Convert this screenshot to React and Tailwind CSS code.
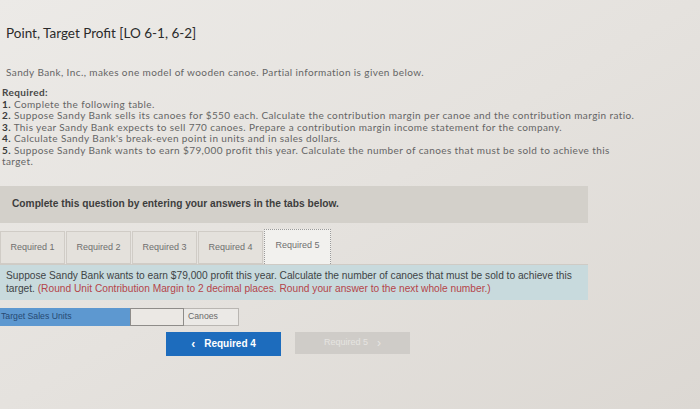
import React from "react";

const tabs = ["Required 1", "Required 2", "Required 3", "Required 4", "Required 5"];

export default function App() {
  const body = { fontFamily: "Lato, 'Open Sans', sans-serif" };
  const tahoma = { fontFamily: "'Liberation Sans', Arial, sans-serif" };

  return (
    <div className="w-[700px] h-[409px] overflow-hidden bg-linear-to-br from-[#eceae7] via-[#e5e2de] to-[#dcd8d3] text-[#656565]" style={body}>
      <div className="pt-[24px] pl-[6px]">
        <h1 className="text-[13.5px] leading-[18px] text-[#2b2b2b]">Point, Target Profit [LO 6-1, 6-2]</h1>
      </div>

      <p className="mt-[24px] pl-[6px] text-[10px] tracking-[0.4px] leading-[12px]">
        Sandy Bank, Inc., makes one model of wooden canoe. Partial information is given below.
      </p>

      <div className="mt-[9px] w-[642px] text-[10px] tracking-[0.4px] leading-[11.5px]">
        <p className="pl-[2px] font-bold text-[#474747]">Required:</p>
        <p className="pl-[2px]"><b className="text-[#3a3a3a]">1.</b> Complete the following table.</p>
        <p className="pl-[2px]"><b className="text-[#3a3a3a]">2.</b> Suppose Sandy Bank sells its canoes for $550 each. Calculate the contribution margin per canoe and the contribution margin ratio.</p>
        <p className="pl-[2px]"><b className="text-[#3a3a3a]">3.</b> This year Sandy Bank expects to sell 770 canoes. Prepare a contribution margin income statement for the company.</p>
        <p className="pl-[2px]"><b className="text-[#3a3a3a]">4.</b> Calculate Sandy Bank's break-even point in units and in sales dollars.</p>
        <p className="pl-[2px] pr-[20px]"><b className="text-[#3a3a3a]">5.</b> Suppose Sandy Bank wants to earn $79,000 profit this year. Calculate the number of canoes that must be sold to achieve this target.</p>
      </div>

      <div className="w-[588px]">
        <div className="mt-[18px] h-[37px] bg-[#d3d0ca] flex items-center pl-[12px]">
          <p className="text-[10.2px] font-bold text-[#3d3d3d]" style={tahoma}>
            Complete this question by entering your answers in the tabs below.
          </p>
        </div>

        <div className="mt-[7px] h-[35px] flex items-end border-b border-[#cfcbc5]" style={tahoma}>
          {tabs.map((t, i) =>
            i === 4 ? (
              <div key={t} className="w-[67px] h-[35px] bg-[#f2f1ee] border border-dotted border-[#9a9a9a] border-b-0 flex items-center justify-center pb-[1px] text-[9px] text-[#6f6f6f]">
                {t}
              </div>
            ) : (
              <div key={t} className="w-[65px] h-[33px] mr-[1px] bg-[#e4e1dc] border border-[#d0ccc6] flex items-center justify-center pt-[2px] text-[9px] text-[#6f6f6f]">
                {t}
              </div>
            )
          )}
        </div>

        <div className="h-[35px] bg-[#c8dadd] px-[6px] pt-[4px] text-[10.2px] leading-[13px] text-[#3e4446]" style={tahoma}>
          Suppose Sandy Bank wants to earn $79,000 profit this year. Calculate the number of canoes that must be sold to achieve this target. <span className="text-[#b5454a]">(Round Unit Contribution Margin to 2 decimal places. Round your answer to the next whole number.)</span>
        </div>
      </div>

      <div className="mt-[8px] flex h-[18px] text-[8.7px]" style={tahoma}>
        <div className="w-[130px] bg-[#5d98d0] text-[#274a73] flex items-center pl-[1px]">Target Sales Units</div>
        <div className="w-[54px] bg-[#ebe8e4] border border-[#8e8c89]"></div>
        <div className="w-[55px] bg-[#ebe9e6] border border-[#b9b6b2] border-l-0 flex items-center pl-[4px] text-[#6a6a6a]">Canoes</div>
      </div>

      <div className="mt-[6px] flex pl-[166px] gap-[14px]" style={tahoma}>
        <button className="w-[115px] h-[24px] bg-[#1d6cbd] text-white text-[10px] font-bold flex items-center justify-center gap-[9px]">
          <span className="text-[12px]">‹</span> Required 4
        </button>
        <button className="w-[115px] h-[22px] bg-[#cfccc8] text-[#e6e4e1] text-[9px] flex items-center justify-center gap-[9px]">
          Required 5 <span className="text-[12px]">›</span>
        </button>
      </div>
    </div>
  );
}
